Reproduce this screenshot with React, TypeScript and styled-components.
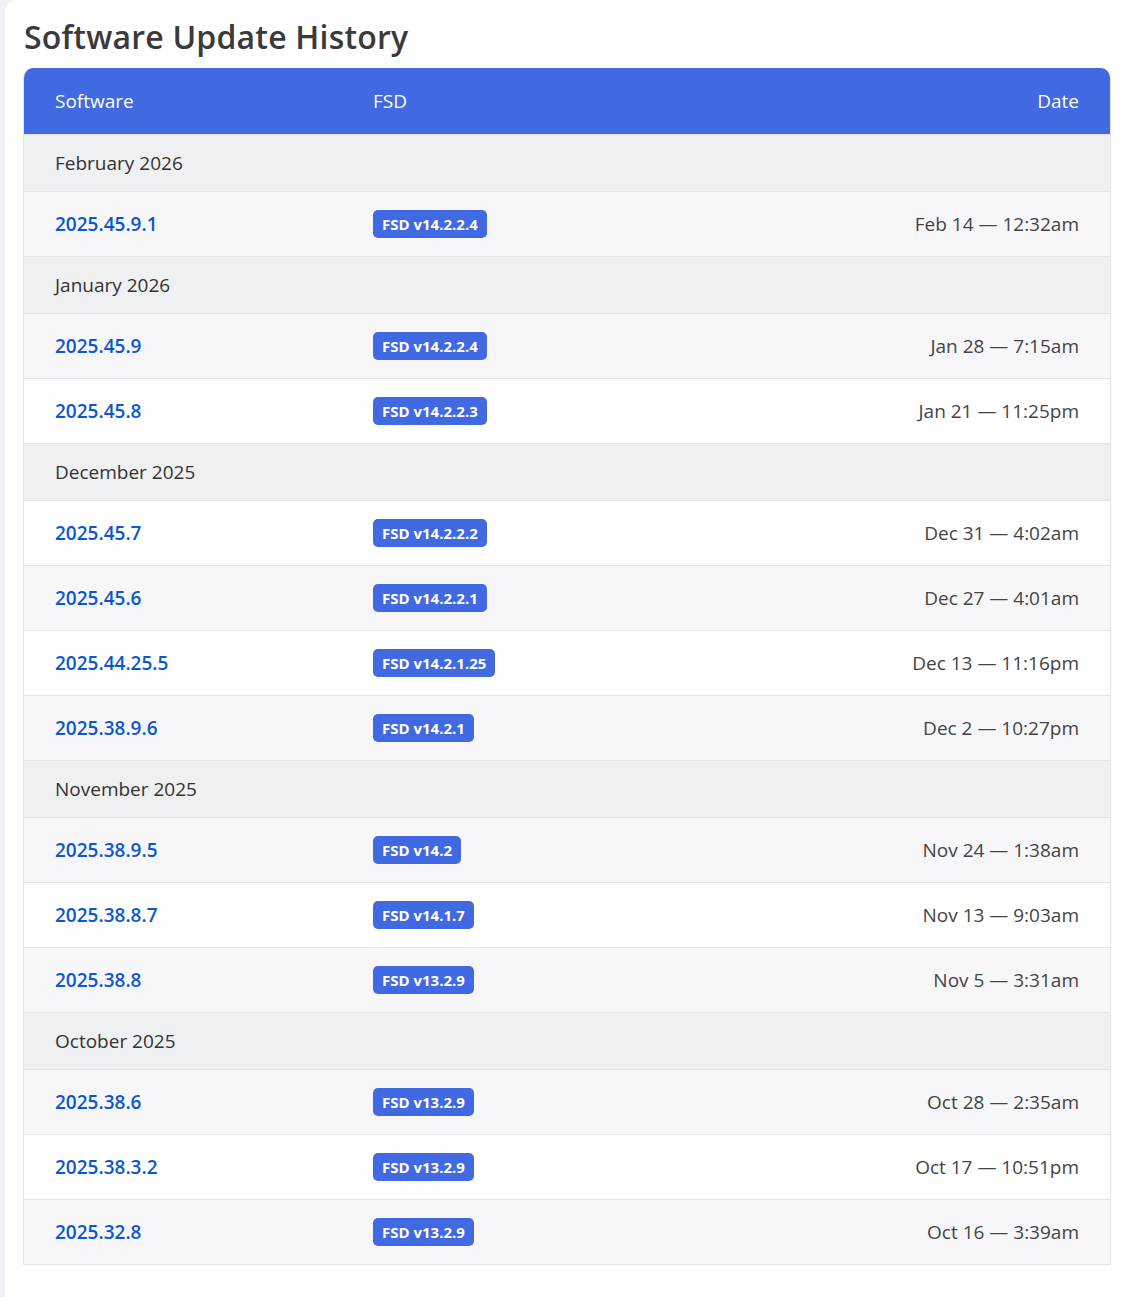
import React from "react";
import styled, { createGlobalStyle } from "styled-components";

const Global = createGlobalStyle`
  body { margin: 0; background: #eef0f3; font-family: "Open Sans", "Liberation Sans", sans-serif; }
`;

const Card = styled.div`
  margin-left: 5px;
  background: #fff;
  border-radius: 12px 0 0 0;
  padding: 14px 13px 44px 18px;
  min-height: 1297px;
  box-sizing: border-box;
`;
const Title = styled.h1`
  margin: 0 0 8px 1px;
  font-size: 32px;
  font-weight: 600;
  color: #3a3a3a;
  letter-spacing: 0.2px;
  line-height: 46px;
`;
const Table = styled.div`
  border-radius: 10px 10px 0 0;
  overflow: hidden;
  border: 1px solid #e2e4e8;
  border-top: none;
`;
const Head = styled.div`
  display: grid;
  grid-template-columns: 318px 1fr auto;
  align-items: center;
  height: 66px;
  padding: 0 31px 0 31px;
  background: #4169e1;
  color: #fff;
  font-size: 19px;
  font-weight: 500;
`;
const Month = styled.div`
  height: 56px;
  display: flex;
  align-items: center;
  padding-left: 31px;
  background: #eef0f2;
  border-top: 1px solid #e2e4e8;
  color: #333;
  font-size: 19px;
`;
const Row = styled.div<{ $alt: boolean }>`
  display: grid;
  grid-template-columns: 318px 1fr auto;
  align-items: center;
  height: 64px;
  padding: 0 31px;
  background: ${(p) => (p.$alt ? "#f7f7f9" : "#fff")};
  border-top: 1px solid #e2e4e8;
`;
const Ver = styled.span`
  color: #0b57d0;
  font-size: 19px;
  font-weight: 600;
`;
const Badge = styled.span`
  justify-self: start;
  background: #4169e1;
  color: #fff;
  font-size: 15px;
  font-weight: 700;
  padding: 4px 9px;
  border-radius: 5px;
`;
const DateTxt = styled.span`
  color: #444;
  font-size: 19px;
`;

const data: [string, [string, string, string][]][] = [
  ["February 2026", [["2025.45.9.1", "v14.2.2.4", "Feb 14 — 12:32am"]]],
  ["January 2026", [["2025.45.9", "v14.2.2.4", "Jan 28 — 7:15am"], ["2025.45.8", "v14.2.2.3", "Jan 21 — 11:25pm"]]],
  ["December 2025", [
    ["2025.45.7", "v14.2.2.2", "Dec 31 — 4:02am"],
    ["2025.45.6", "v14.2.2.1", "Dec 27 — 4:01am"],
    ["2025.44.25.5", "v14.2.1.25", "Dec 13 — 11:16pm"],
    ["2025.38.9.6", "v14.2.1", "Dec 2 — 10:27pm"],
  ]],
  ["November 2025", [
    ["2025.38.9.5", "v14.2", "Nov 24 — 1:38am"],
    ["2025.38.8.7", "v14.1.7", "Nov 13 — 9:03am"],
    ["2025.38.8", "v13.2.9", "Nov 5 — 3:31am"],
  ]],
  ["October 2025", [
    ["2025.38.6", "v13.2.9", "Oct 28 — 2:35am"],
    ["2025.38.3.2", "v13.2.9", "Oct 17 — 10:51pm"],
    ["2025.32.8", "v13.2.9", "Oct 16 — 3:39am"],
  ]],
];

export default function App() {
  let idx = 0;
  return (
    <>
      <Global />
      <Card>
        <Title>Software Update History</Title>
        <Table>
          <Head>
            <span>Software</span>
            <span>FSD</span>
            <span>Date</span>
          </Head>
          {data.map(([m, rows]) => {
            idx++;
            return (
              <React.Fragment key={m}>
                <Month>{m}</Month>
                {rows.map((r) => {
                  const alt = idx % 2 === 1;
                  idx++;
                  return (
                    <Row key={r[0]} $alt={alt}>
                      <Ver>{r[0]}</Ver>
                      <Badge>FSD {r[1]}</Badge>
                      <DateTxt>{r[2]}</DateTxt>
                    </Row>
                  );
                })}
              </React.Fragment>
            );
          })}
        </Table>
      </Card>
    </>
  );
}
